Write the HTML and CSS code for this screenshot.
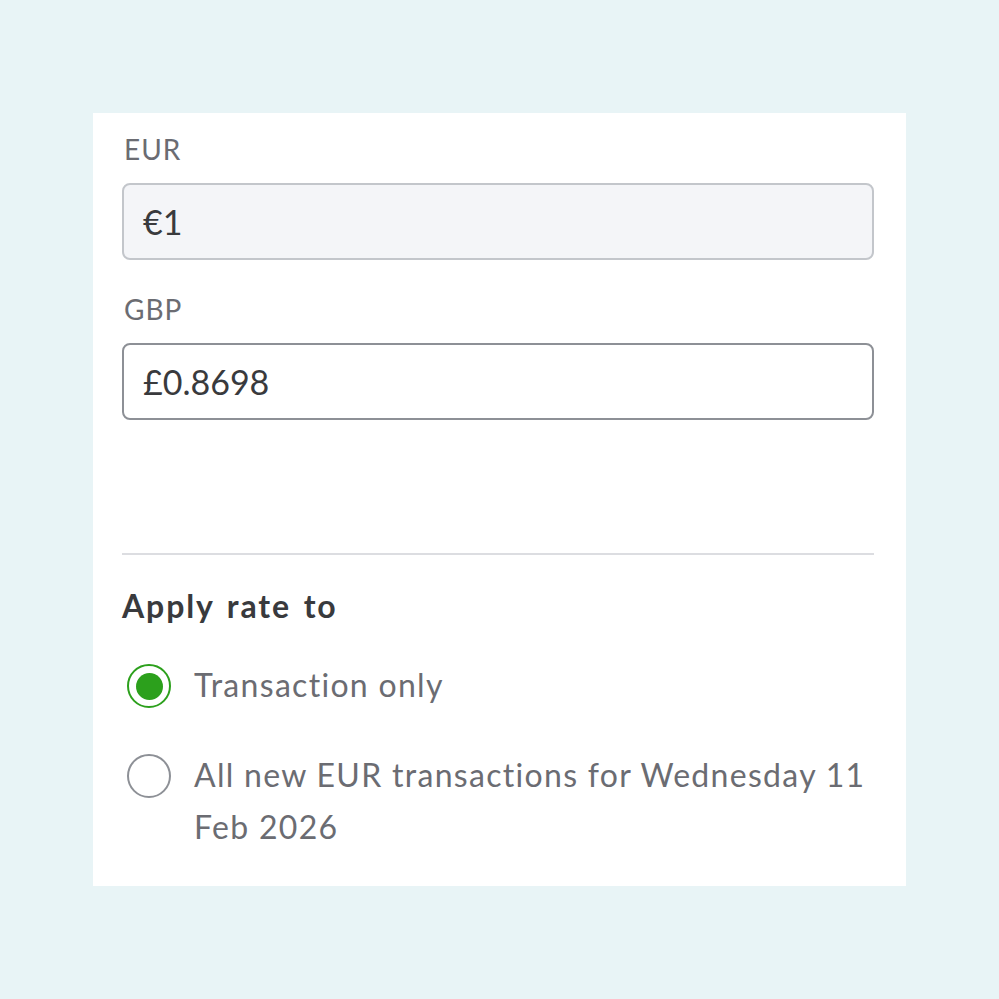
FILE: index.html
```html
<!DOCTYPE html>
<html lang="en">
<head>
<meta charset="utf-8">
<title>Exchange rate</title>
<link rel="stylesheet" href="styles.css">
</head>
<body>
  <div class="panel">
    <div class="field">
      <div class="label">EUR</div>
      <div class="input input-disabled">€1</div>
    </div>
    <div class="field">
      <div class="label">GBP</div>
      <div class="input">£0.8698</div>
    </div>
    <hr class="divider">
    <div class="heading">Apply rate to</div>
    <div class="options">
      <div class="option">
        <span class="radio radio-checked"><span class="dot"></span></span>
        <span class="option-text">Transaction only</span>
      </div>
      <div class="option">
        <span class="radio"></span>
        <span class="option-text">All new EUR transactions for Wednesday 11 Feb 2026</span>
      </div>
    </div>
  </div>
</body>
</html>
```
FILE: styles.css
```css
html, body {
  margin: 0;
  padding: 0;
}
body {
  background: #e8f4f6;
  font-family: Lato, "Noto Sans", sans-serif;
  padding: 113px 0 0 93px;
  height: 999px;
  box-sizing: border-box;
}
.panel {
  width: 813px;
  box-sizing: border-box;
  background: #ffffff;
  padding: 18px 32px 33px 29px;
}
.field + .field {
  margin-top: 31px;
}
.label {
  font-size: 28px;
  line-height: 36px;
  color: #6b6c72;
  padding-left: 2px;
  margin-bottom: 16px;
  letter-spacing: 1px;
}
.input {
  height: 77px;
  box-sizing: border-box;
  border: 2px solid #8d9096;
  border-radius: 8px;
  background: #ffffff;
  display: flex;
  align-items: center;
  padding-left: 19px;
  font-size: 34px;
  color: #393a3d;
}
.input-disabled {
  background: #f4f5f8;
  border-color: #c3c6cb;
}
.divider {
  border: 0;
  height: 2px;
  background: #dcdde1;
  margin: 133px 0 0 0;
}
.heading {
  margin-top: 31px;
  font-size: 32px;
  line-height: 40px;
  font-weight: 700;
  color: #393a3d;
  letter-spacing: 1.9px;
  word-spacing: 3px;
}
.options {
  margin-top: 33px;
  display: flex;
  flex-direction: column;
  gap: 38px;
}
.option {
  display: flex;
  align-items: flex-start;
}
.radio {
  flex: none;
  width: 44px;
  height: 44px;
  box-sizing: border-box;
  border: 2px solid #8d9096;
  border-radius: 50%;
  margin: 5px 23px 0 5px;
  display: flex;
  align-items: center;
  justify-content: center;
}
.radio-checked {
  border-color: #2ca01c;
}
.dot {
  width: 27px;
  height: 27px;
  border-radius: 50%;
  background: #2ca01c;
}
.option-text {
  font-size: 32px;
  line-height: 52px;
  color: #6b6c72;
  letter-spacing: 1.3px;
}
```
